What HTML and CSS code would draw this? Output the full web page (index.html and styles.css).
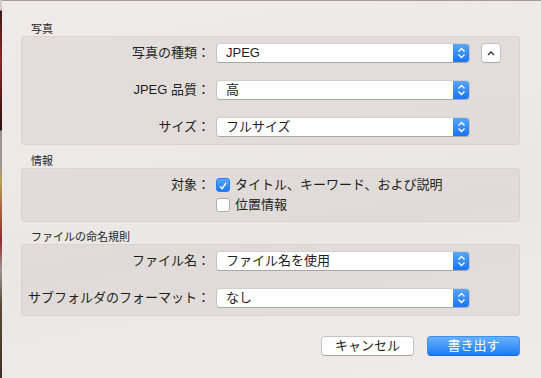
FILE: index.html
```html
<!DOCTYPE html>
<html>
<head>
    <title>書き出し</title>
    <link rel="stylesheet" href="styles.css">
</head>
<body>
    <div class="desk"></div>
    <div class="window">
        <div class="group-title">写真</div>
        <div class="group">
            <div class="row">
                <span class="label">写真の種類：</span>
                <div class="popup"><span>JPEG</span><span class="stepper"><svg width="17" height="20" viewBox="0 0 17 20"><path d="M5.5 8.5 L8.5 5.5 L11.5 8.5 M5.5 11.5 L8.5 14.5 L11.5 11.5" fill="none" stroke="#fff" stroke-width="1.4"/></svg></span></div>
                <button class="disclose"><svg width="10" height="6" viewBox="0 0 10 6"><path d="M2 5 L5 2 L8 5" fill="none" stroke="#333" stroke-width="1.4"/></svg></button>
            </div>
            <div class="row">
                <span class="label">JPEG 品質：</span>
                <div class="popup"><span>高</span><span class="stepper"><svg width="17" height="20" viewBox="0 0 17 20"><path d="M5.5 8.5 L8.5 5.5 L11.5 8.5 M5.5 11.5 L8.5 14.5 L11.5 11.5" fill="none" stroke="#fff" stroke-width="1.4"/></svg></span></div>
            </div>
            <div class="row">
                <span class="label">サイズ：</span>
                <div class="popup"><span>フルサイズ</span><span class="stepper"><svg width="17" height="20" viewBox="0 0 17 20"><path d="M5.5 8.5 L8.5 5.5 L11.5 8.5 M5.5 11.5 L8.5 14.5 L11.5 11.5" fill="none" stroke="#fff" stroke-width="1.4"/></svg></span></div>
            </div>
        </div>

        <div class="group-title">情報</div>
        <div class="group info">
            <div class="check-row">
                <span class="label">対象：</span>
                <span class="check on"><svg width="14" height="14" viewBox="0 0 14 14"><path d="M3.5 7.5 L6 10 L10.5 3.5" fill="none" stroke="#fff" stroke-width="1.6"/></svg></span>
                <span>タイトル、キーワード、および説明</span>
            </div>
            <div class="check-row">
                <span class="label"></span>
                <span class="check"></span>
                <span>位置情報</span>
            </div>
        </div>

        <div class="group-title">ファイルの命名規則</div>
        <div class="group">
            <div class="row">
                <span class="label">ファイル名：</span>
                <div class="popup"><span>ファイル名を使用</span><span class="stepper"><svg width="17" height="20" viewBox="0 0 17 20"><path d="M5.5 8.5 L8.5 5.5 L11.5 8.5 M5.5 11.5 L8.5 14.5 L11.5 11.5" fill="none" stroke="#fff" stroke-width="1.4"/></svg></span></div>
            </div>
            <div class="row">
                <span class="label">サブフォルダのフォーマット：</span>
                <div class="popup"><span>なし</span><span class="stepper"><svg width="17" height="20" viewBox="0 0 17 20"><path d="M5.5 8.5 L8.5 5.5 L11.5 8.5 M5.5 11.5 L8.5 14.5 L11.5 11.5" fill="none" stroke="#fff" stroke-width="1.4"/></svg></span></div>
            </div>
        </div>

        <div class="actions">
            <button class="btn">キャンセル</button>
            <button class="btn primary">書き出す</button>
        </div>
    </div>
</body>
</html>
```

FILE: styles.css
```css
html, body { margin: 0; height: 100%; }
body { display: flex; font-family: "Liberation Sans", "Noto Sans CJK JP", sans-serif; font-size: 13px; color: #1e1e1e; overflow: hidden; }
.desk { width: 2px; background: linear-gradient(#cfc9c7 0, #cfc9c7 10px, #3a1c1a 11px, #8a2a22 60px, #2a1010 130px, #9a9594 131px, #9a9594 165px, #b8a05a 180px, #8e2a2c 240px, #9a9594 270px, #5a4a36 305px, #3a3226 378px); }
.window { flex: 1; background: linear-gradient(170deg, #eeebea, #ebe7e5 60%, #eeebe9); border-top: 1px solid #a49a97; padding: 21px 21px 0 19px; }

.group-title { font-size: 11px; line-height: 14px; padding-left: 10px; color: #262626; }
.group { background: rgba(120, 100, 90, 0.09); border: 1px solid rgba(100, 85, 80, 0.07); border-radius: 4px; padding: 6px 0 7px; margin-bottom: 9px; display: flex; flex-direction: column; gap: 17px; }
.group.info { gap: 0; padding: 6px 0 6px; margin-bottom: 8px; }

.row { display: flex; align-items: center; height: 20px; }
.label { width: 188px; text-align: right; line-height: 20px; flex: none; }
.popup { margin-left: 6px; width: 254px; height: 20px; box-sizing: border-box; background: #fff; border: 1px solid #c4c1c0; border-top-color: #d2d0cf; border-bottom-color: #a9a6a5; border-radius: 4px; display: flex; align-items: center; justify-content: space-between; padding-left: 9px; overflow: hidden; line-height: 18px; }
.stepper { width: 17px; height: 20px; margin-right: -1px; background: linear-gradient(#5ba9fc, #1573f5); display: flex; }
.disclose { margin-left: 11px; width: 20px; height: 20px; padding: 0; background: #fff; border: 1px solid #c4c1c0; border-bottom-color: #a9a6a5; border-radius: 4px; display: flex; align-items: center; justify-content: center; }

.check-row { display: flex; align-items: center; height: 20px; line-height: 20px; }
.check { margin-left: 6px; margin-right: 5px; width: 14px; height: 14px; box-sizing: border-box; border: 1px solid #b1aeac; border-radius: 3px; background: #fff; display: flex; }
.check.on { border-color: #2c7ff0; background: linear-gradient(#5ca9fc, #1877f6); }

.actions { display: flex; justify-content: flex-end; gap: 13px; margin-top: 20px; }
.btn { width: 93px; height: 20px; padding: 0; font-family: inherit; font-size: 13px; line-height: 18px; color: #1e1e1e; background: #fff; border: 1px solid #c7c4c3; border-bottom-color: #a9a6a5; border-radius: 4px; }
.btn.primary { color: #fff; background: linear-gradient(#69b1fb, #1a7cf8); border-color: #3f8ff5; border-bottom-color: #1c68d8; }
```
